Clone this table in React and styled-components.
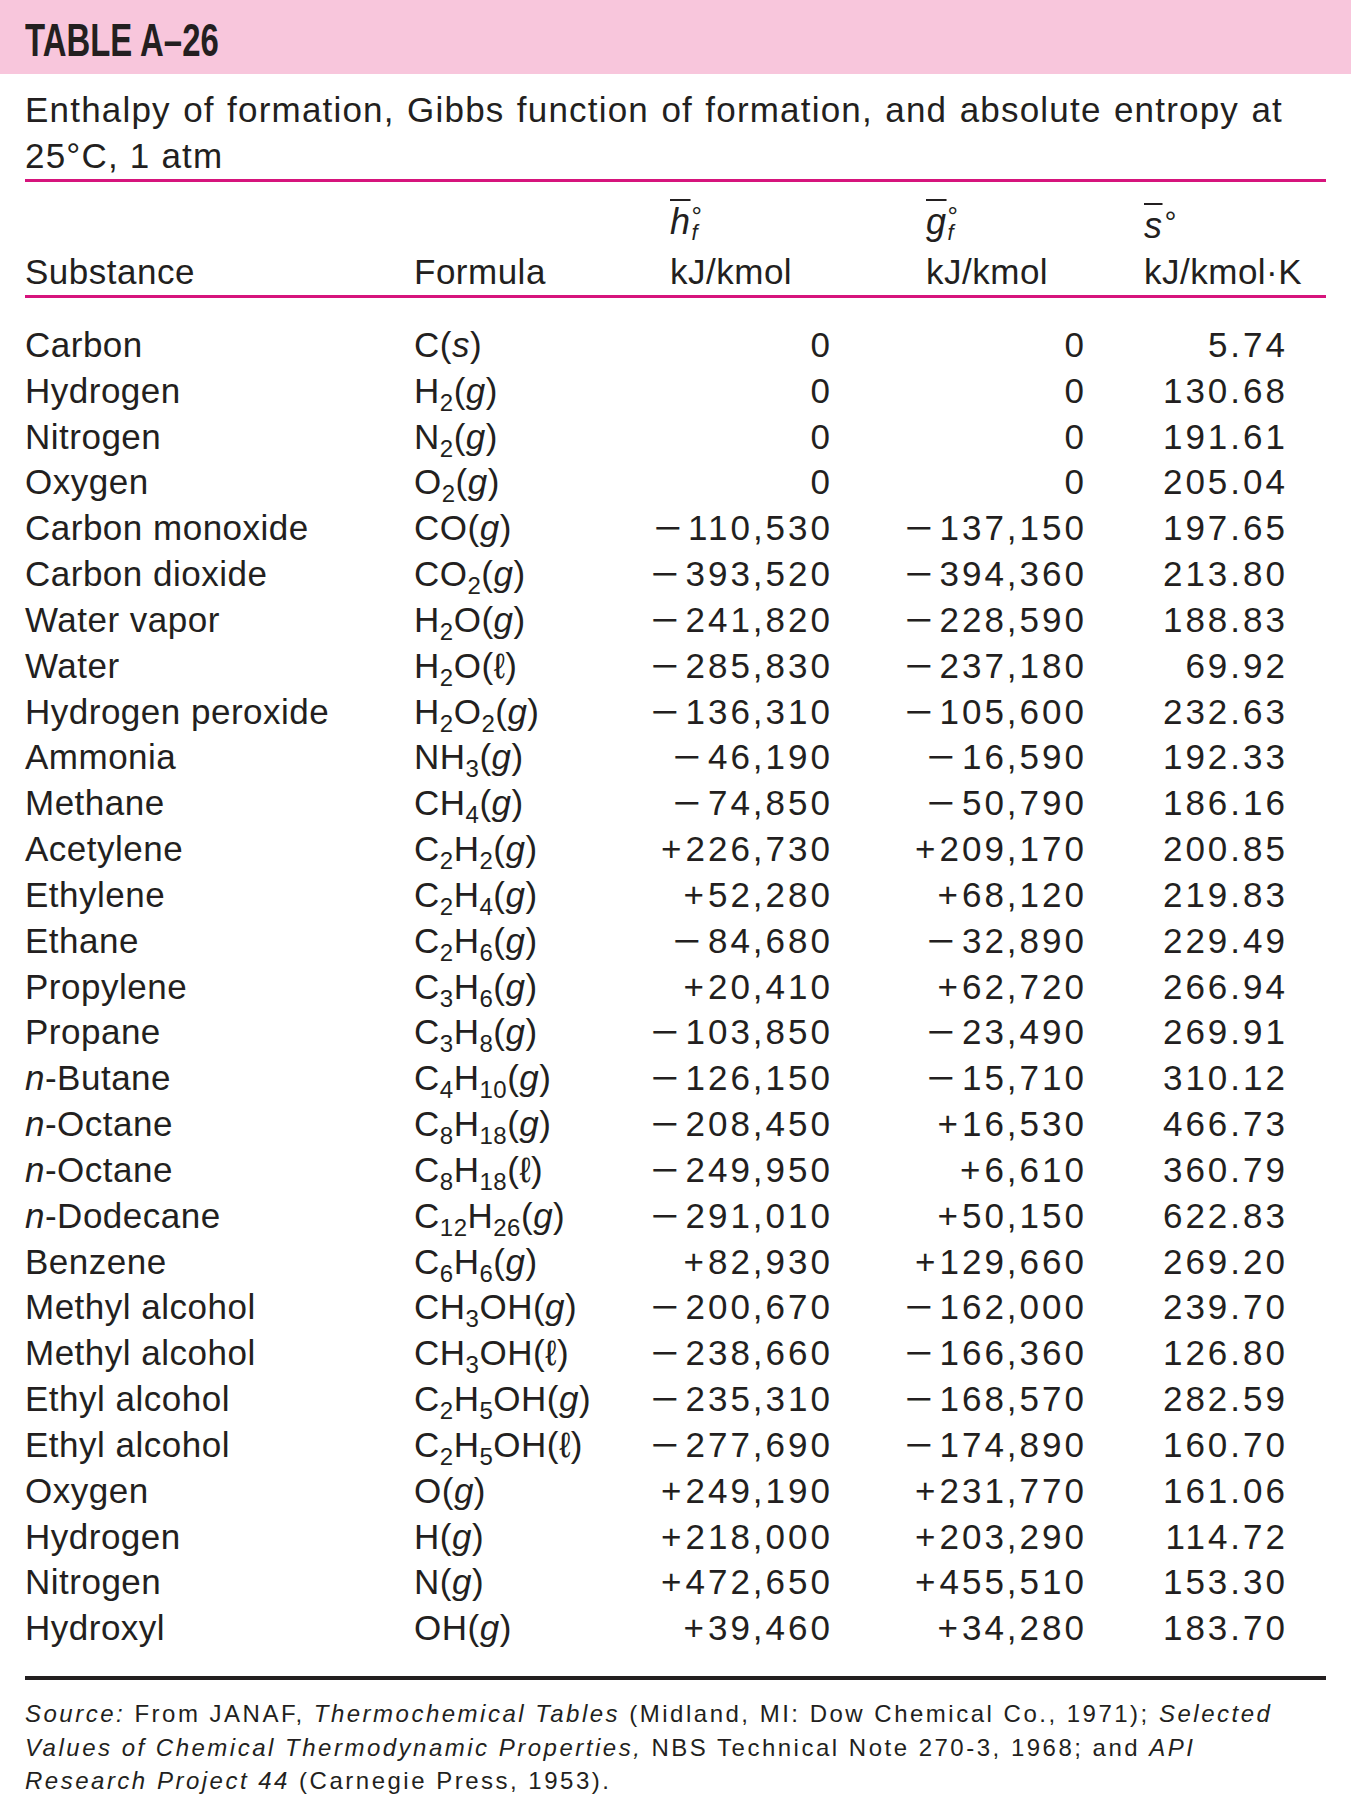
import React from "react";
import styled, { createGlobalStyle } from "styled-components";

const INK = "#231f20";
const PINK = "#f8c6dc";
const MAGENTA = "#d6147c";

const GlobalStyle = createGlobalStyle`
  html, body {
    margin: 0;
    padding: 0;
    background: #ffffff;
  }
  body {
    font-family: "Liberation Sans", Arial, sans-serif;
    color: ${INK};
  }
`;

const Page = styled.div`
  width: 1351px;
  padding-bottom: 8px;
`;

const TitleBar = styled.div`
  height: 74px;
  box-sizing: border-box;
  padding: 17px 0 0 25px;
  background: ${PINK};
`;

const Title = styled.h1`
  margin: 0;
  font-size: 46px;
  line-height: 1;
  font-weight: 700;
  display: inline-block;
  transform: scaleX(0.715);
  transform-origin: left center;
  white-space: nowrap;
`;

const Body = styled.div`
  margin: 0 25px;
`;

const Caption = styled.div`
  margin-top: 13px;
  padding-right: 43px;
  font-size: 35px;
  line-height: 46px;
  letter-spacing: 1.2px;
  border-bottom: 3px solid ${MAGENTA};
`;

const CaptionLine = styled.div`
  text-align: ${(p) => (p.$justify ? "justify" : "left")};
  text-align-last: ${(p) => (p.$justify ? "justify" : "auto")};
`;

const Grid = styled.div`
  display: grid;
  grid-template-columns: 389px 190px 226px 254px 201px 1fr;
  align-items: end;
`;

const HeadRow = styled(Grid)`
  height: 116px;
  box-sizing: border-box;
  border-bottom: 3px solid ${MAGENTA};
  font-size: 35px;
  line-height: 46px;
  letter-spacing: 0.5px;
`;

const HeadCell = styled.div`
  padding-left: ${(p) => p.$pad || 0}px;
  white-space: nowrap;
`;

const SymLine = styled.div`
  height: 50px;
  line-height: 46px;
  font-style: italic;
  font-size: 36px;
`;

const Barred = styled.span`
  text-decoration: overline;
  text-decoration-thickness: 2px;
`;

const Stack = styled.span`
  display: inline-flex;
  flex-direction: column;
  vertical-align: 9px;
  margin-left: 1px;
`;

const Deg = styled.span`
  font-style: normal;
  font-size: 26px;
  line-height: 14px;
`;

const SubF = styled.span`
  font-style: italic;
  font-size: 22px;
  line-height: 20px;
`;

const TopDeg = styled.span`
  font-style: normal;
  font-size: 30px;
  vertical-align: 6px;
  margin-left: 2px;
`;

const Rows = styled.div`
  padding-top: 24px;
  padding-bottom: 25px;
  border-bottom: 4px solid ${INK};
`;

const Row = styled(Grid)`
  align-items: baseline;
  height: 45.84px;
  font-size: 35px;
  line-height: 45.84px;
  letter-spacing: 0.5px;
  white-space: nowrap;
`;

const Num = styled.div`
  text-align: right;
  letter-spacing: 3px;
  margin-right: -3px;
`;

const Sign = styled.span`
  display: inline-block;
  margin-right: ${(p) => (p.$minus ? 3 : 1)}px;
  transform: ${(p) => (p.$minus ? "scaleX(1.35)" : "none")};
  transform-origin: right center;
`;

const Sub = styled.sub`
  font-size: 24px;
  line-height: 0;
  vertical-align: -8px;
  letter-spacing: 0.5px;
`;

const Note = styled.p`
  margin: 17px 0 0;
  font-size: 24px;
  line-height: 33.5px;
  letter-spacing: 2.5px;
  white-space: nowrap;
`;

const rows = [
  ["Carbon", "C(s)", "0", "0", "5.74"],
  ["Hydrogen", "H_2(g)", "0", "0", "130.68"],
  ["Nitrogen", "N_2(g)", "0", "0", "191.61"],
  ["Oxygen", "O_2(g)", "0", "0", "205.04"],
  ["Carbon monoxide", "CO(g)", "−110,530", "−137,150", "197.65"],
  ["Carbon dioxide", "CO_2(g)", "−393,520", "−394,360", "213.80"],
  ["Water vapor", "H_2O(g)", "−241,820", "−228,590", "188.83"],
  ["Water", "H_2O(l)", "−285,830", "−237,180", "69.92"],
  ["Hydrogen peroxide", "H_2O_2(g)", "−136,310", "−105,600", "232.63"],
  ["Ammonia", "NH_3(g)", "−46,190", "−16,590", "192.33"],
  ["Methane", "CH_4(g)", "−74,850", "−50,790", "186.16"],
  ["Acetylene", "C_2H_2(g)", "+226,730", "+209,170", "200.85"],
  ["Ethylene", "C_2H_4(g)", "+52,280", "+68,120", "219.83"],
  ["Ethane", "C_2H_6(g)", "−84,680", "−32,890", "229.49"],
  ["Propylene", "C_3H_6(g)", "+20,410", "+62,720", "266.94"],
  ["Propane", "C_3H_8(g)", "−103,850", "−23,490", "269.91"],
  ["n-Butane", "C_4H_10(g)", "−126,150", "−15,710", "310.12"],
  ["n-Octane", "C_8H_18(g)", "−208,450", "+16,530", "466.73"],
  ["n-Octane", "C_8H_18(l)", "−249,950", "+6,610", "360.79"],
  ["n-Dodecane", "C_12H_26(g)", "−291,010", "+50,150", "622.83"],
  ["Benzene", "C_6H_6(g)", "+82,930", "+129,660", "269.20"],
  ["Methyl alcohol", "CH_3OH(g)", "−200,670", "−162,000", "239.70"],
  ["Methyl alcohol", "CH_3OH(l)", "−238,660", "−166,360", "126.80"],
  ["Ethyl alcohol", "C_2H_5OH(g)", "−235,310", "−168,570", "282.59"],
  ["Ethyl alcohol", "C_2H_5OH(l)", "−277,690", "−174,890", "160.70"],
  ["Oxygen", "O(g)", "+249,190", "+231,770", "161.06"],
  ["Hydrogen", "H(g)", "+218,000", "+203,290", "114.72"],
  ["Nitrogen", "N(g)", "+472,650", "+455,510", "153.30"],
  ["Hydroxyl", "OH(g)", "+39,460", "+34,280", "183.70"],
];

// "C_2H_5OH(l)" -> C<sub>2</sub>H<sub>5</sub>OH(ℓ)
function Formula({ text }) {
  const parts = text.split(/(_\d+|\([gsl]\))/).filter(Boolean);
  return parts.map((p, i) => {
    if (p[0] === "_") return <Sub key={i}>{p.slice(1)}</Sub>;
    if (p === "(l)") return <span key={i}>(ℓ)</span>;
    if (p[0] === "(") return <span key={i}>(<i>{p[1]}</i>)</span>;
    return <span key={i}>{p}</span>;
  });
}

function Name({ text }) {
  if (text.startsWith("n-")) return <><i>n</i>{text.slice(1)}</>;
  return text;
}

function Value({ v }) {
  const sign = v[0];
  if (sign === "−" || sign === "+")
    return <Num><Sign $minus={sign === "−"}>{sign}</Sign>{v.slice(1)}</Num>;
  return <Num>{v}</Num>;
}

export default function App() {
  return (
    <Page>
      <GlobalStyle />
      <TitleBar>
        <Title>TABLE A–26</Title>
      </TitleBar>
      <Body>
        <Caption>
          <CaptionLine $justify>
            Enthalpy of formation, Gibbs function of formation, and absolute entropy at
          </CaptionLine>
          <CaptionLine>25°C, 1 atm</CaptionLine>
        </Caption>

        <HeadRow>
          <HeadCell>Substance</HeadCell>
          <HeadCell>Formula</HeadCell>
          <HeadCell $pad={66}>
            <SymLine>
              <Barred>h</Barred>
              <Stack><Deg>°</Deg><SubF>f</SubF></Stack>
            </SymLine>
            <div>kJ/kmol</div>
          </HeadCell>
          <HeadCell $pad={96}>
            <SymLine>
              <Barred>g</Barred>
              <Stack><Deg>°</Deg><SubF>f</SubF></Stack>
            </SymLine>
            <div>kJ/kmol</div>
          </HeadCell>
          <HeadCell $pad={60}>
            <SymLine>
              <Barred>s</Barred>
              <TopDeg>°</TopDeg>
            </SymLine>
            <div>kJ/kmol·K</div>
          </HeadCell>
        </HeadRow>

        <Rows>
          {rows.map(([name, formula, h, g, s], i) => (
            <Row key={i}>
              <div><Name text={name} /></div>
              <div><Formula text={formula} /></div>
              <Value v={h} />
              <Value v={g} />
              <Value v={s} />
            </Row>
          ))}
        </Rows>

        <Note>
          <i>Source:</i> From JANAF, <i>Thermochemical Tables</i> (Midland, MI: Dow Chemical Co., 1971); <i>Selected</i>
          <br />
          <i>Values of Chemical Thermodynamic Properties,</i> NBS Technical Note 270-3, 1968; and <i>API</i>
          <br />
          <i>Research Project 44</i> (Carnegie Press, 1953).
        </Note>
      </Body>
    </Page>
  );
}
